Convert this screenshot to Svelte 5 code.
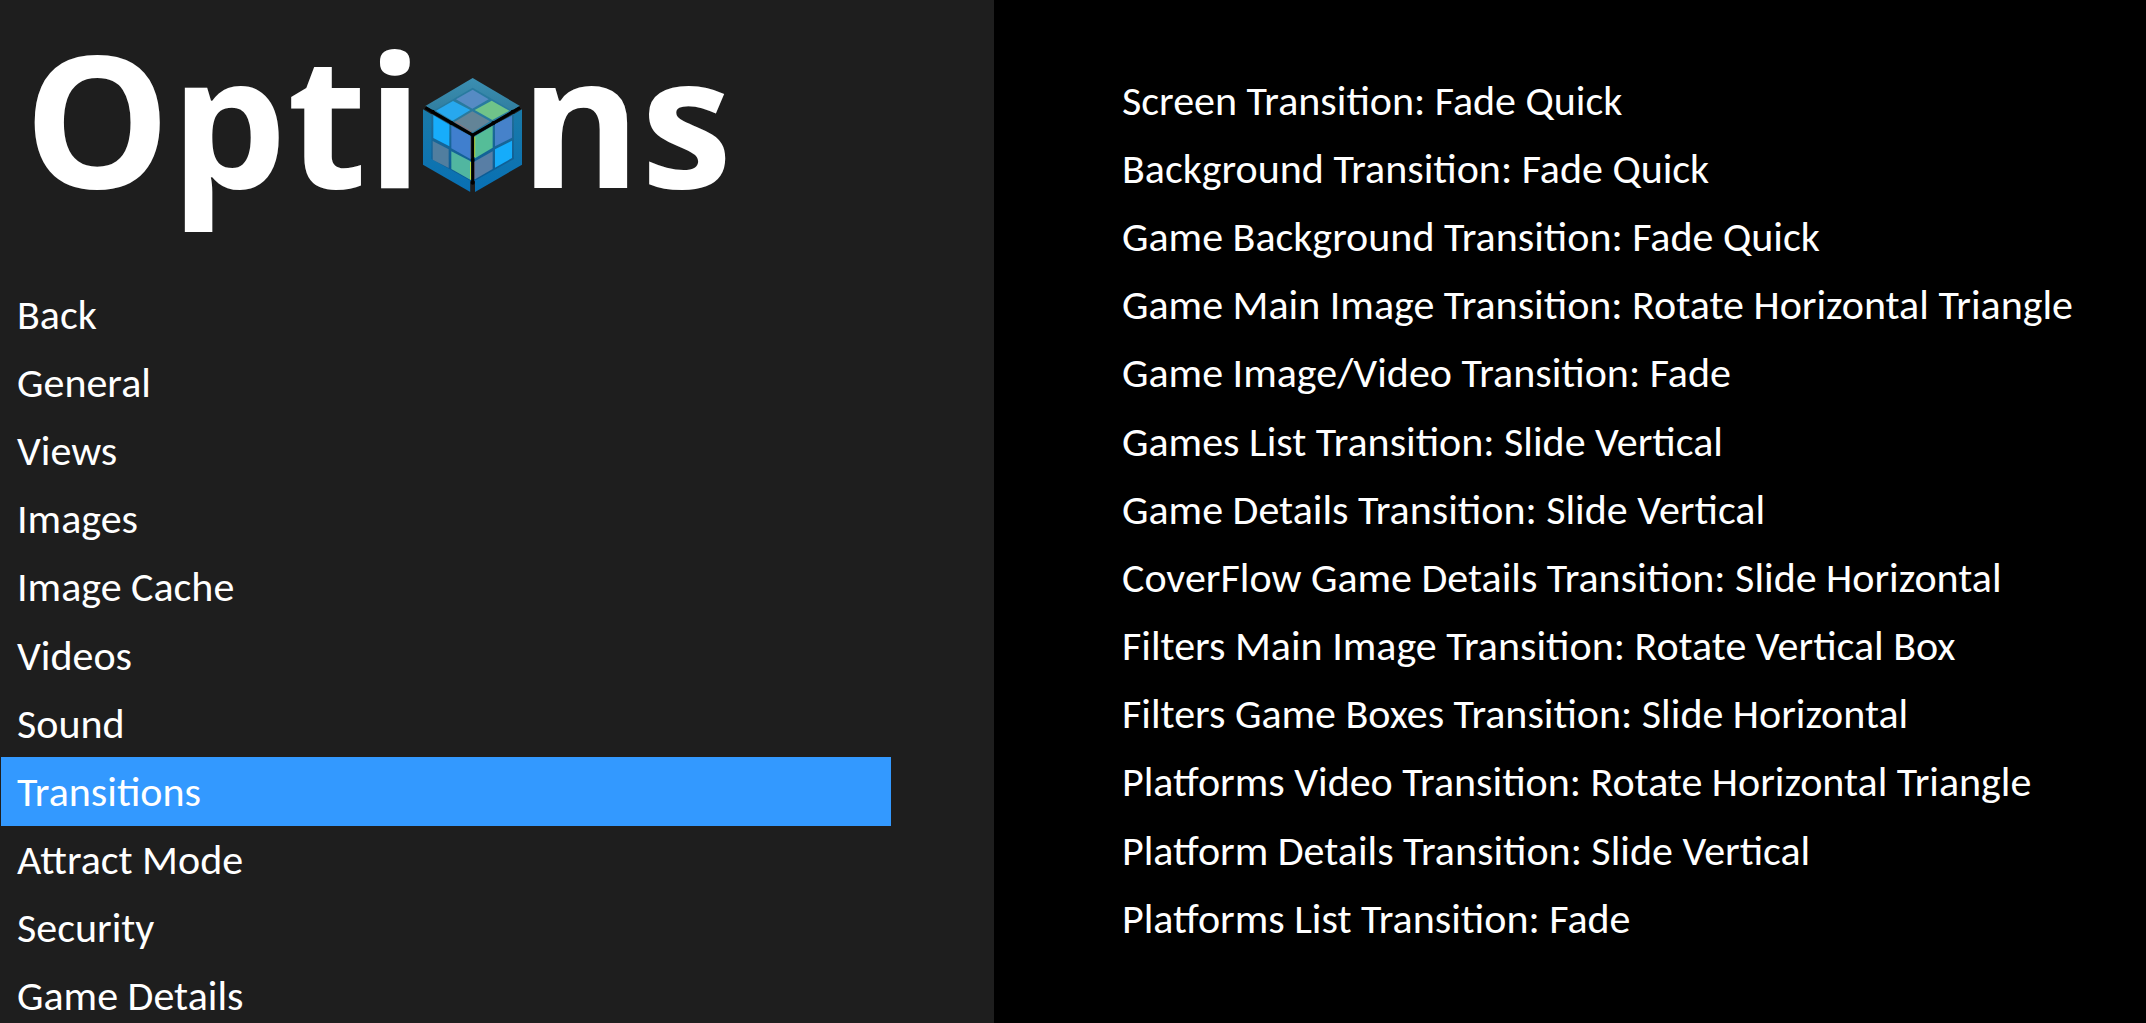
<script lang="ts">
  const menu = [
    'Back',
    'General',
    'Views',
    'Images',
    'Image Cache',
    'Videos',
    'Sound',
    'Transitions',
    'Attract Mode',
    'Security',
    'Game Details'
  ];

  const settings = [
    { name: 'Screen Transition', value: 'Fade Quick' },
    { name: 'Background Transition', value: 'Fade Quick' },
    { name: 'Game Background Transition', value: 'Fade Quick' },
    { name: 'Game Main Image Transition', value: 'Rotate Horizontal Triangle' },
    { name: 'Game Image/Video Transition', value: 'Fade' },
    { name: 'Games List Transition', value: 'Slide Vertical' },
    { name: 'Game Details Transition', value: 'Slide Vertical' },
    { name: 'CoverFlow Game Details Transition', value: 'Slide Horizontal' },
    { name: 'Filters Main Image Transition', value: 'Rotate Vertical Box' },
    { name: 'Filters Game Boxes Transition', value: 'Slide Horizontal' },
    { name: 'Platforms Video Transition', value: 'Rotate Horizontal Triangle' },
    { name: 'Platform Details Transition', value: 'Slide Vertical' },
    { name: 'Platforms List Transition', value: 'Fade' }
  ];

  let selected = $state('Transitions');
</script>

<div class="options">
  <aside class="sidebar">
    <h1>
      <span>Opti</span>
      <svg class="cube" viewBox="39 38 297 342" aria-hidden="true">
        <defs>
          <linearGradient id="top" x1="0" y1="0" x2="0" y2="1">
            <stop offset="0" stop-color="#3b8fb2" />
            <stop offset="1" stop-color="#2a7293" />
          </linearGradient>
          <linearGradient id="side" x1="0" y1="0" x2="0" y2="1">
            <stop offset="0" stop-color="#1a7aa8" />
            <stop offset="1" stop-color="#0870b4" />
          </linearGradient>
          <linearGradient id="inner" x1="0" y1="0" x2="0" y2="1">
            <stop offset="0" stop-color="#216e98" />
            <stop offset="1" stop-color="#095a96" />
          </linearGradient>
        </defs>

        <path d="M188 38 330 122 188 205 46 122Z" fill="url(#top)" />
        <path d="M39 132 181 216V380L39 298Z" fill="url(#side)" />
        <path d="M336 132 195 216V380L336 298Z" fill="url(#side)" />
        <path d="M188 67 306 136 188 205 70 136Z" fill="#287a9f" />
        <path d="M64 145 188 214V350L64 281Z" fill="url(#inner)" />
        <path d="M312 145 188 214V350L312 281Z" fill="url(#inner)" />

        <path d="M188 73 236 102 187 130 138 102Z" fill="#568bc4" />
        <path d="M129 107 181 134 128 166 78 136Z" fill="#27a8ee" />
        <path d="M245 106 298 136 247 164 194 134Z" fill="#70c389" />
        <path d="M187 138 240 168 188 201 134 169Z" fill="#638497" />

        <path d="M70 150 118 178V243L70 218Z" fill="#17adfb" />
        <path d="M124 181 181 211V281L124 249Z" fill="#407fce" />
        <path d="M68 227 116 252V308L68 283Z" fill="#517e9f" />
        <path d="M124 258 182 288V344L124 311Z" fill="#51b6a0" />

        <path d="M195 213 248 181V247L195 279Z" fill="#55bd98" />
        <path d="M255 177 306 151V217L255 243Z" fill="#4682ca" />
        <path d="M195 288 248 258V311L195 342Z" fill="#587ea5" />
        <path d="M255 252 306 226V278L255 307Z" fill="#15acfb" />

        <path d="M134 169 184 200" stroke="#c5624f" stroke-width="2" />
        <path d="M183 215V280M193 290V341" stroke="#a85f62" stroke-width="2" />
        <path d="M194 214V276M182 290V343" stroke="#d4eb38" stroke-width="3" />
        <path d="M46 127 188 209 330 127M188 209V352" fill="none" stroke="#000" stroke-width="9" />
        <path d="M188 352V380" stroke="#1e1e1e" stroke-width="12" />
        <circle cx="68" cy="139" r="6" />
        <circle cx="124" cy="173" r="6" />
        <circle cx="250" cy="173" r="6" />
        <circle cx="308" cy="139" r="6" />
        <circle cx="188" cy="284" r="6" />
        <circle cx="188" cy="352" r="6" />
      </svg>
      <span>ns</span>
    </h1>

    <nav>
      {#each menu as item}
        <button class="row" class:active={item === selected} onclick={() => (selected = item)}>{item}</button>
      {/each}
    </nav>
  </aside>

  <main class="settings">
    {#each settings as setting}
      <button class="row">{setting.name}: {setting.value}</button>
    {/each}
  </main>
</div>

<style>
  :global(body) {
    background: #000;
  }

  .options {
    display: grid;
    grid-template-columns: 994fr 1152fr;
    height: 100vh;
    overflow: hidden;
    color: #fff;
    font-family: Carlito, Lato, sans-serif;
  }

  .sidebar {
    min-width: 0;
    background: #1e1e1e;
  }

  h1 {
    display: flex;
    height: 280px;
    margin: 0;
    padding-left: 24px;
    box-sizing: border-box;
    font-family: 'Open Sans', sans-serif;
    font-size: 184px;
    font-weight: 700;
    line-height: 234px;
  }

  .cube {
    flex: none;
    width: 99px;
    height: 114px;
    margin-top: 78px;
    margin-right: -2px;
  }

  nav {
    margin-right: 103px;
    padding-left: 1px;
  }

  .row {
    display: block;
    width: 100%;
    height: calc(100vh / 15);
    padding: 0 16px;
    border: 0;
    background: none;
    color: inherit;
    font-family: inherit;
    font-size: 42px;
    text-align: left;
    white-space: nowrap;
    cursor: pointer;
  }

  .row.active {
    background: #3399ff;
  }

  .settings {
    min-width: 0;
    padding-top: 66px;
    padding-left: 112px;
  }
</style>
